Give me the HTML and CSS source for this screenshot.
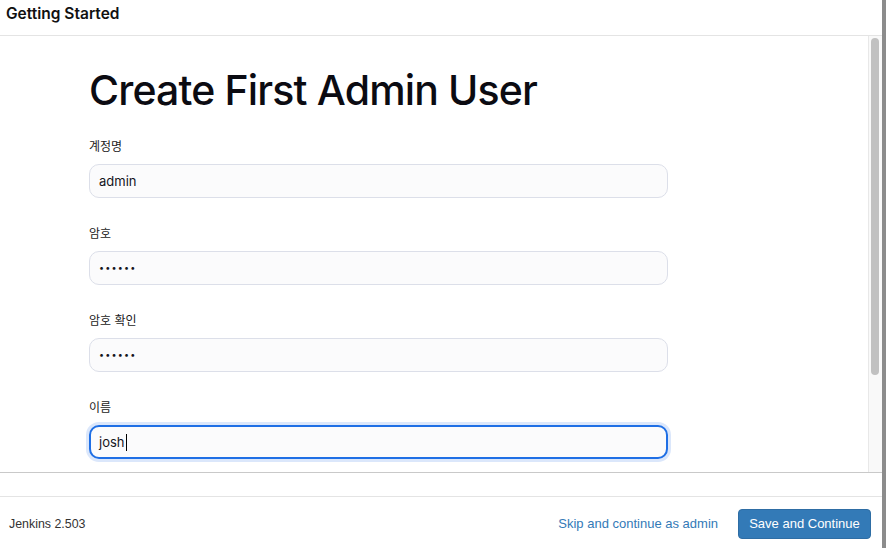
FILE: index.html
```html
<!DOCTYPE html>
<html lang="ko">
<head>
<meta charset="utf-8">
<title>Getting Started</title>
<link rel="stylesheet" href="styles.css">
</head>
<body>
<div class="window">
  <header class="header">Getting Started</header>
  <div class="pane">
    <main class="content">
      <h1 class="title">Create First Admin User</h1>
      <div class="field">
        <div class="label">계정명</div>
        <div class="input">admin</div>
      </div>
      <div class="field">
        <div class="label">암호</div>
        <div class="input dots">••••••</div>
      </div>
      <div class="field">
        <div class="label">암호 확인</div>
        <div class="input dots">••••••</div>
      </div>
      <div class="field">
        <div class="label">이름</div>
        <div class="input focused">josh<span class="caret"></span></div>
      </div>
    </main>
    <div class="scrollbar"><div class="thumb"></div></div>
  </div>
  <div class="spacer"></div>
  <footer class="footer">
    <span class="version">Jenkins 2.503</span>
    <div class="actions">
      <a class="skip" href="#">Skip and continue as admin</a>
      <button class="save" type="button">Save and Continue</button>
    </div>
  </footer>
</div>
<div class="edge"></div>
</body>
</html>
```
FILE: styles.css
```css
html, body {
  margin: 0;
  padding: 0;
  background: #ffffff;
}
body {
  display: flex;
  width: 886px;
  height: 548px;
  overflow: hidden;
  font-family: Inter, "Noto Sans CJK KR", sans-serif;
  color: #14141f;
}
.window {
  flex: 1;
  display: flex;
  flex-direction: column;
  min-width: 0;
}
.edge {
  width: 4px;
  background: #8c8c8c;
}
.header {
  height: 35px;
  flex: none;
  border-bottom: 1px solid #e4e4e4;
  padding-left: 6px;
  font-size: 15.5px;
  font-weight: 600;
  line-height: 27px;
  color: #111;
  box-sizing: content-box;
}
.pane {
  height: 436px;
  flex: none;
  display: flex;
  border-bottom: 1px solid #c9c9c9;
}
.content {
  flex: 1;
  overflow: hidden;
  padding-left: 89px;
  padding-top: 29px;
}
.title {
  margin: 0 0 23px 0;
  font-family: Inter, sans-serif;
  font-size: 41px;
  font-weight: 500;
  line-height: 50px;
  letter-spacing: -0.85px;
  color: #0b0b12;
}
.field {
  margin-bottom: 27px;
}
.label {
  font-family: "Noto Sans CJK KR", sans-serif;
  font-size: 12px;
  line-height: 15px;
  margin-bottom: 11px;
  color: #1b1b22;
}
.input {
  width: 579px;
  height: 34px;
  box-sizing: border-box;
  border: 1px solid #dcdfe9;
  border-radius: 10px;
  background: #fbfbfc;
  padding-left: 9px;
  font-family: Inter, sans-serif;
  font-size: 13px;
  line-height: 32px;
  color: #15151c;
  display: flex;
  align-items: center;
}
.input.dots {
  font-size: 9px;
  letter-spacing: 1.2px;
}
.input.focused {
  border: 2px solid #1f6fe5;
  padding-left: 8px;
  box-shadow: 0 0 0 3px #dbe7fb;
}
.caret {
  display: inline-block;
  width: 1px;
  height: 17px;
  background: #000;
  margin-left: 1px;
}
.scrollbar {
  flex: none;
  border-left: 1px solid #e8e8e8;
  background: #f9f9f9;
  padding: 2px 3px 0 2px;
  box-sizing: content-box;
  width: 8px;
}
.thumb {
  height: 337px;
  width: 8px;
  border-radius: 4px;
  background: #c1c1c1;
}
.spacer {
  height: 23px;
  flex: none;
  border-bottom: 1px solid #e4e4e4;
}
.footer {
  flex: 1;
  display: flex;
  align-items: center;
  justify-content: space-between;
  padding: 2px 11px 0 9px;
  font-family: "Liberation Sans", Arial, sans-serif;
}
.version {
  font-size: 12.4px;
  color: #333;
}
.actions {
  display: flex;
  align-items: center;
  gap: 20px;
}
.skip {
  font-size: 13px;
  color: #337ab7;
  text-decoration: none;
}
.save {
  height: 30px;
  width: 133px;
  border: 1px solid #2e6da4;
  border-radius: 4px;
  background: #337ab7;
  color: #fff;
  font-family: "Liberation Sans", Arial, sans-serif;
  font-size: 13px;
  padding: 0;
}
```
